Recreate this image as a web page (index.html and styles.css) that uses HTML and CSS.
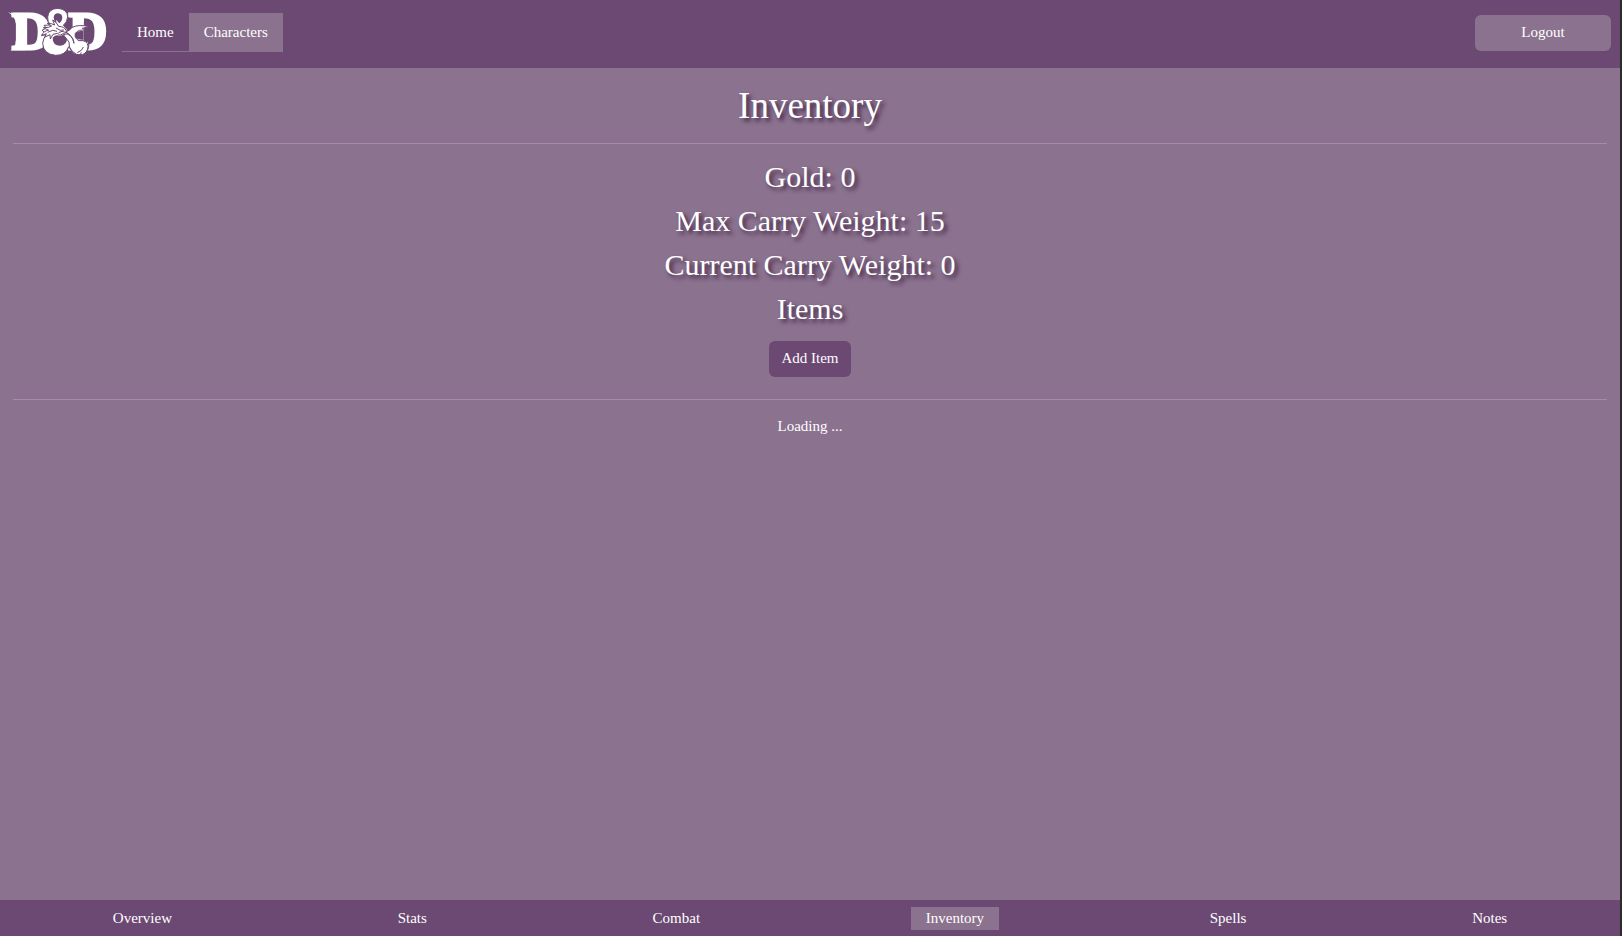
FILE: index.html
```html
<!DOCTYPE html>
<html lang="en">
<head>
<meta charset="utf-8">
<meta name="viewport" content="width=device-width, initial-scale=1">
<title>Inventory</title>
<link rel="stylesheet" href="styles.css">
</head>
<body class="page">
<header class="topbar">
  <a class="brand" href="#" aria-label="Dungeons and Dragons">
    <svg class="logo" viewBox="27 24 303 147" aria-hidden="true">
      <g class="letter">
        <text x="36" y="146">D</text>
        <text x="206" y="146">D</text>
      </g>
      <path class="ink" d="M24 36Q42 46 76 42V70H47Q46 50 24 36ZM203 37Q219 46 250 42L252 66H224Q222 48 203 37ZM47 122Q47 145 31 151H78V122Z"/>
      <path class="ink edge" d="M143 51Q145 26 174 25Q203 28 203 51Q202 66 190 76Q204 88 205 100L226 124Q246 118 265 126Q270 145 257 157Q240 170 220 160L206 140Q197 166 167 166Q130 163 128 130Q130 115 138 105L124 106L134 97L126 91L139 84L132 76L151 75Q142 65 143 51Z"/>
      <path class="hole" d="M161 53Q162 40 174 40Q187 41 187 54Q186 65 178 70L168 59L170 71Q161 64 161 53ZM158 113Q168 102 180 108L195 103L201 113Q202 135 181 137Q157 136 158 113Z"/>
      <path class="ink edge" d="M125 107Q131 92 146 91L130 83Q147 84 155 78L142 70Q156 70 164 75L158 60Q170 66 176 79Q194 80 198 91Q205 97 202 104L190 101L180 106L173 100L159 103L151 117L150 104L135 111L139 101Z"/>
      <path class="hole" d="M222 101Q232 92 251 92V119Q236 121 226 113Z"/>
      <path class="ink edge" d="M190 104Q202 98 211 107Q222 116 222 130Q217 105 197 96Q211 91 215 83Q234 72 268 80L247 85L257 91Q235 87 226 100Q222 115 237 122Q263 119 264 139Q263 158 247 164Q229 168 217 154Q205 142 207 126Z"/>
      <path class="line" d="M143 97L158 91L171 94M168 84L181 91L192 90M176 98L186 94L199 98M232 158Q247 152 250 141M240 166L244 157"/>
    </svg>
  </a>
  <nav class="tabs" aria-label="Main">
    <a class="tab" href="#">Home</a>
    <a class="tab tab-active" href="#" aria-current="page">Characters</a>
  </nav>
  <button class="button logout" type="button">Logout</button>
</header>
<main class="content">
  <h1 class="title">Inventory</h1>
  <hr class="rule">
  <section class="summary">
    <h2 class="stat">Gold: 0</h2>
    <h2 class="stat">Max Carry Weight: 15</h2>
    <h2 class="stat">Current Carry Weight: 0</h2>
    <h2 class="stat">Items</h2>
    <button class="button add" type="button">Add Item</button>
  </section>
  <hr class="rule">
  <p class="status">Loading ...</p>
</main>
<nav class="bottombar" aria-label="Character">
  <a class="section-link" href="#">Overview</a>
  <a class="section-link" href="#">Stats</a>
  <a class="section-link" href="#">Combat</a>
  <a class="section-link section-active" href="#" aria-current="page">Inventory</a>
  <a class="section-link" href="#">Spells</a>
  <a class="section-link" href="#">Notes</a>
</nav>
</body>
</html>
```

FILE: styles.css
```css
:root {
  --dark: #6b4973;
  --light: #8b728e;
  --rule: #a68bab;
}

* {
  box-sizing: border-box;
}

.page {
  display: flex;
  flex-direction: column;
  min-height: 100vh;
  margin: 0;
  border-right: 2px solid #2b2b2b;
  background: var(--light);
  color: #fff;
  font: 15px/23px "Liberation Serif", "Times New Roman", serif;
}

.topbar {
  display: flex;
  align-items: flex-start;
  height: 68px;
  padding: 8px 9px;
  background: var(--dark);
}

.brand {
  display: block;
  margin-right: 12px;
}

.logo {
  display: block;
  width: 101px;
  height: 49px;
  overflow: visible;
}

.letter {
  fill: #fff;
  stroke: #fff;
  stroke-width: 9;
  font: bold 160px "Liberation Serif", serif;
}

.ink {
  fill: #fff;
}

.edge {
  stroke: var(--dark);
  stroke-width: 3;
}

.hole {
  fill: var(--dark);
}

.line {
  fill: none;
  stroke: var(--dark);
  stroke-width: 3;
}

.tabs {
  display: flex;
  margin-top: 5px;
}

.tab {
  padding: 8px 15px 7px;
  border-bottom: 1px solid var(--light);
  color: #fff;
  text-decoration: none;
}

.tab-active {
  background: var(--light);
}

.button {
  height: 36px;
  padding: 0 12px 2px;
  border: 0;
  border-radius: 6px;
  color: #fff;
  font: inherit;
}

.logout {
  width: 136px;
  margin: 7px 0 0 auto;
  background: var(--light);
}

.content {
  flex: 1;
  padding: 16px 13px;
  text-align: center;
}

.title,
.stat {
  font-weight: 400;
  text-shadow: 3px 3px 4px #3d2145;
}

.title {
  margin: 0;
  font-size: 37px;
  line-height: 44px;
}

.rule {
  height: 1px;
  margin: 15px 0;
  border: 0;
  background: var(--rule);
}

.stat {
  margin: 0 0 8px;
  font-size: 30px;
  line-height: 36px;
}

.add {
  margin: 6px 0 7px;
  background: var(--dark);
}

.status {
  margin: 0;
}

.bottombar {
  display: flex;
  align-items: center;
  justify-content: space-around;
  height: 36px;
  background: var(--dark);
}

.section-link {
  padding: 0 15px;
  color: #fff;
  text-decoration: none;
}

.section-active {
  background: var(--light);
}
```
